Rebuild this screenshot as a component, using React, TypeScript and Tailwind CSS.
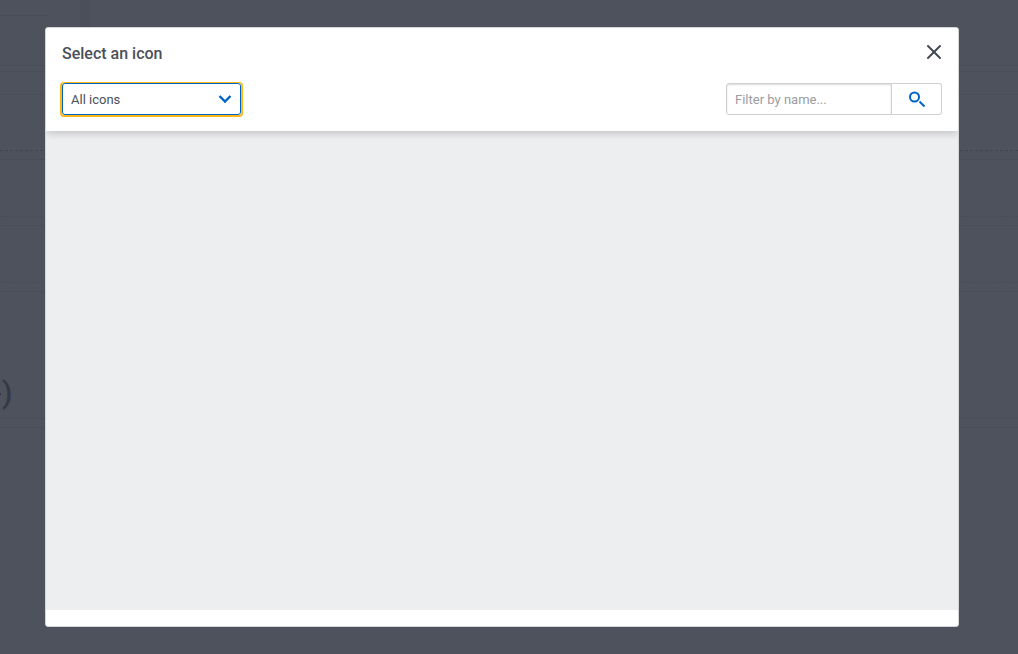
import { X } from "lucide-react";

const font = "font-['Roboto',_'Liberation_Sans',_sans-serif]";

function BackdropPage() {
  return (
    <div className="flex h-[654px] w-full flex-col overflow-hidden bg-[#4e525d]">
      <div className="flex h-[66px] shrink-0 border-b border-[#494d58]">
        <div className="h-4 w-12 border-b border-[#484c57]" />
        <div className="ml-8 h-7 w-[10px] bg-[#4b4f5a]" />
      </div>
      <div className="h-[6px] shrink-0 border-b border-[#494d58]" />
      <div className="h-[23px] shrink-0 border-b border-[#494d58]" />
      <div className="h-[56px] shrink-0 border-b border-dashed border-[#42464f]" />
      <div className="h-[9px] shrink-0 border-b border-[#494d58]" />
      <div className="h-[57px] shrink-0 border-b border-dashed border-[#494d58]" />
      <div className="h-[9px] shrink-0 border-b border-[#494d58]" />
      <div className="h-[57px] shrink-0 border-b border-dashed border-[#494d58]" />
      <div className="h-[9px] shrink-0 border-b border-[#494d58]" />
      <div className="flex h-[127px] shrink-0 items-end border-b border-[#494d58] pb-[5px]">
        <span className="mb-[18px] h-[2px] w-[1px] bg-[#343946]" />
        <span className={`${font} ml-[1px] text-[30px] font-medium leading-[40px] text-[#343946]`}>)</span>
      </div>
      <div className="h-[9px] shrink-0 border-b border-[#494d58]" />
    </div>
  );
}

function IconPickerModal() {
  return (
    <div className={`${font} absolute left-[45px] top-[27px] flex h-[600px] w-[914px] flex-col overflow-hidden rounded-[3px] border border-[#d3d5d9] bg-white`}>
      <div className="relative z-10 flex h-[103px] shrink-0 flex-col bg-white pr-[16px] pl-[15px] shadow-[0_2px_8px_rgba(0,0,0,0.2)]">
        <div className="flex h-[54px] items-start justify-between pt-[15px]">
          <h2 className="ml-[1px] text-base font-medium leading-[21px] text-[#4a4f5a]">Select an icon</h2>
          <X className="mt-[-3px] mr-[-4px] h-[24px] w-[24px] text-[#424752]" strokeWidth={2} />
        </div>
        <div className="flex items-start justify-between">
          <div className="-ml-[1px] flex h-[35px] w-[183px] rounded-[4px] border-2 border-t border-[#fdb813] bg-white">
            <div className="flex flex-1 items-center justify-between rounded-[3px] border border-[#0063c6] px-[8px]">
              <span className="pt-[2px] text-[13px] text-[#4a4f5a]">All icons</span>
              <svg viewBox="0 0 14 10" className="h-[10px] w-[14px]" fill="none" stroke="#0063c6" strokeWidth="2.4">
                <path d="M1.5 2 L7 7.5 L12.5 2" />
              </svg>
            </div>
          </div>
          <div className="mt-[1px] flex h-[32px] w-[216px]">
            <div className="flex w-[166px] items-center rounded-l-[3px] border border-[#cfd0d3] pt-[1px] pl-[8px] shadow-[inset_0_1px_2px_rgba(0,0,0,0.15)]">
              <span className="text-[13px] text-[#9a9ca1]">Filter by name...</span>
            </div>
            <div className="flex flex-1 items-center justify-center rounded-r-[3px] border border-l-0 border-[#cfd0d3]">
              <svg viewBox="0 0 18 18" className="ml-[1px] mt-[1px] h-[18px] w-[18px]" fill="none" stroke="#0063c6">
                <circle cx="6.5" cy="6" r="4.5" strokeWidth="2" />
                <path d="M11.5 10.5 L16.5 15.5" strokeWidth="2" />
              </svg>
            </div>
          </div>
        </div>
      </div>
      <div className="flex-1 bg-[#edeef0]" />
      <div className="h-[16px] shrink-0 bg-white" />
    </div>
  );
}

export default function App() {
  return (
    <div className="relative h-[654px] w-full overflow-hidden">
      <BackdropPage />
      <IconPickerModal />
    </div>
  );
}
